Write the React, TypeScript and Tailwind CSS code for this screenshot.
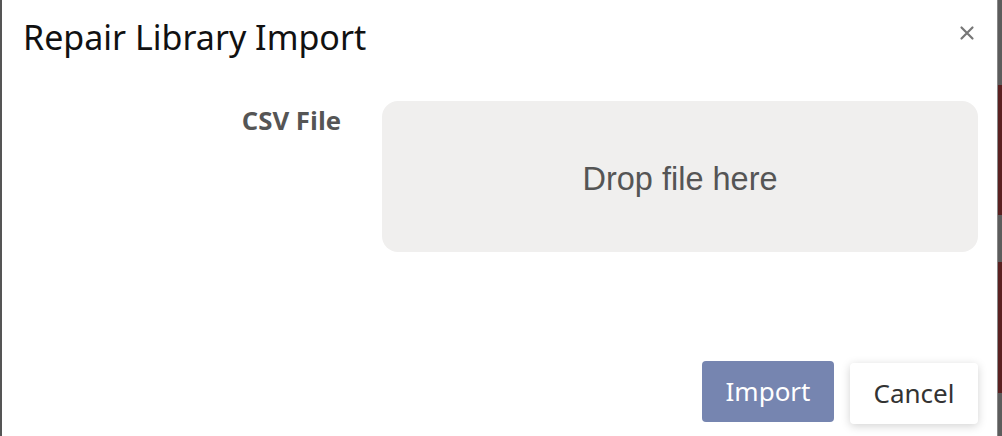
export default function App() {
  return (
    <div className="flex h-[436px] w-[1002px] overflow-hidden bg-[#5c5c5c]">
      {/* backdrop edge, left */}
      <div className="w-[2px] shrink-0 bg-[#555555]" />

      {/* MODAL */}
      <div className="flex flex-1 flex-col bg-white font-['Noto_Sans',sans-serif]">
        {/* Header */}
        <div className="flex items-start justify-between pl-[21px] pr-[22px] pt-[15px]">
          <h1 className="text-[34px] leading-[44px] text-[#111111]">Repair Library Import</h1>
          <button className="mt-[10px] flex h-[16px] w-[16px] items-center justify-center text-[#777777]">
            <svg viewBox="0 0 16 16" className="h-[16px] w-[16px]" fill="none" stroke="currentColor" strokeWidth={2.2} strokeLinecap="round">
              <path d="M2.5 2.5l11 11M13.5 2.5l-11 11" />
            </svg>
          </button>
        </div>

        {/* Body */}
        <div className="flex items-start gap-[41px] pl-[20px] pr-[19px] pt-[42px]">
          <label className="w-[319px] pt-[3px] text-right font-['Open_Sans',sans-serif] text-[25.8px] font-bold leading-[32px] text-[#555555]">
            CSV File
          </label>
          <div className="flex h-[151px] flex-1 items-center justify-center rounded-[16px] bg-[#f0efee]">
            <span className="pt-[5px] font-['Liberation_Sans',sans-serif] text-[32.5px] text-[#555555]">Drop file here</span>
          </div>
        </div>

        {/* Footer */}
        <div className="mt-auto flex items-start justify-end gap-[16px] pb-[12px] pr-[19px]">
          <button className="h-[61px] w-[132px] rounded-[4px] bg-[#7685b0] text-[26px] text-white">Import</button>
          <button className="mt-[2px] h-[61px] w-[128px] rounded-[4px] bg-white text-[26px] text-[#333333] shadow-[0_2px_10px_rgba(0,0,0,0.18)]">
            Cancel
          </button>
        </div>
      </div>

      {/* backdrop edge, right */}
      <div className="flex w-[5px] shrink-0 flex-col border-l border-[#888888]">
        <div className="h-[85px] bg-[#5c5c5c]" />
        <div className="h-[130px] bg-[#5a2020]" />
        <div className="h-[47px] bg-[#5c5c5c]" />
        <div className="h-[131px] bg-[#5a2020]" />
        <div className="flex-1 bg-[#5c5c5c]" />
      </div>
    </div>
  );
}
